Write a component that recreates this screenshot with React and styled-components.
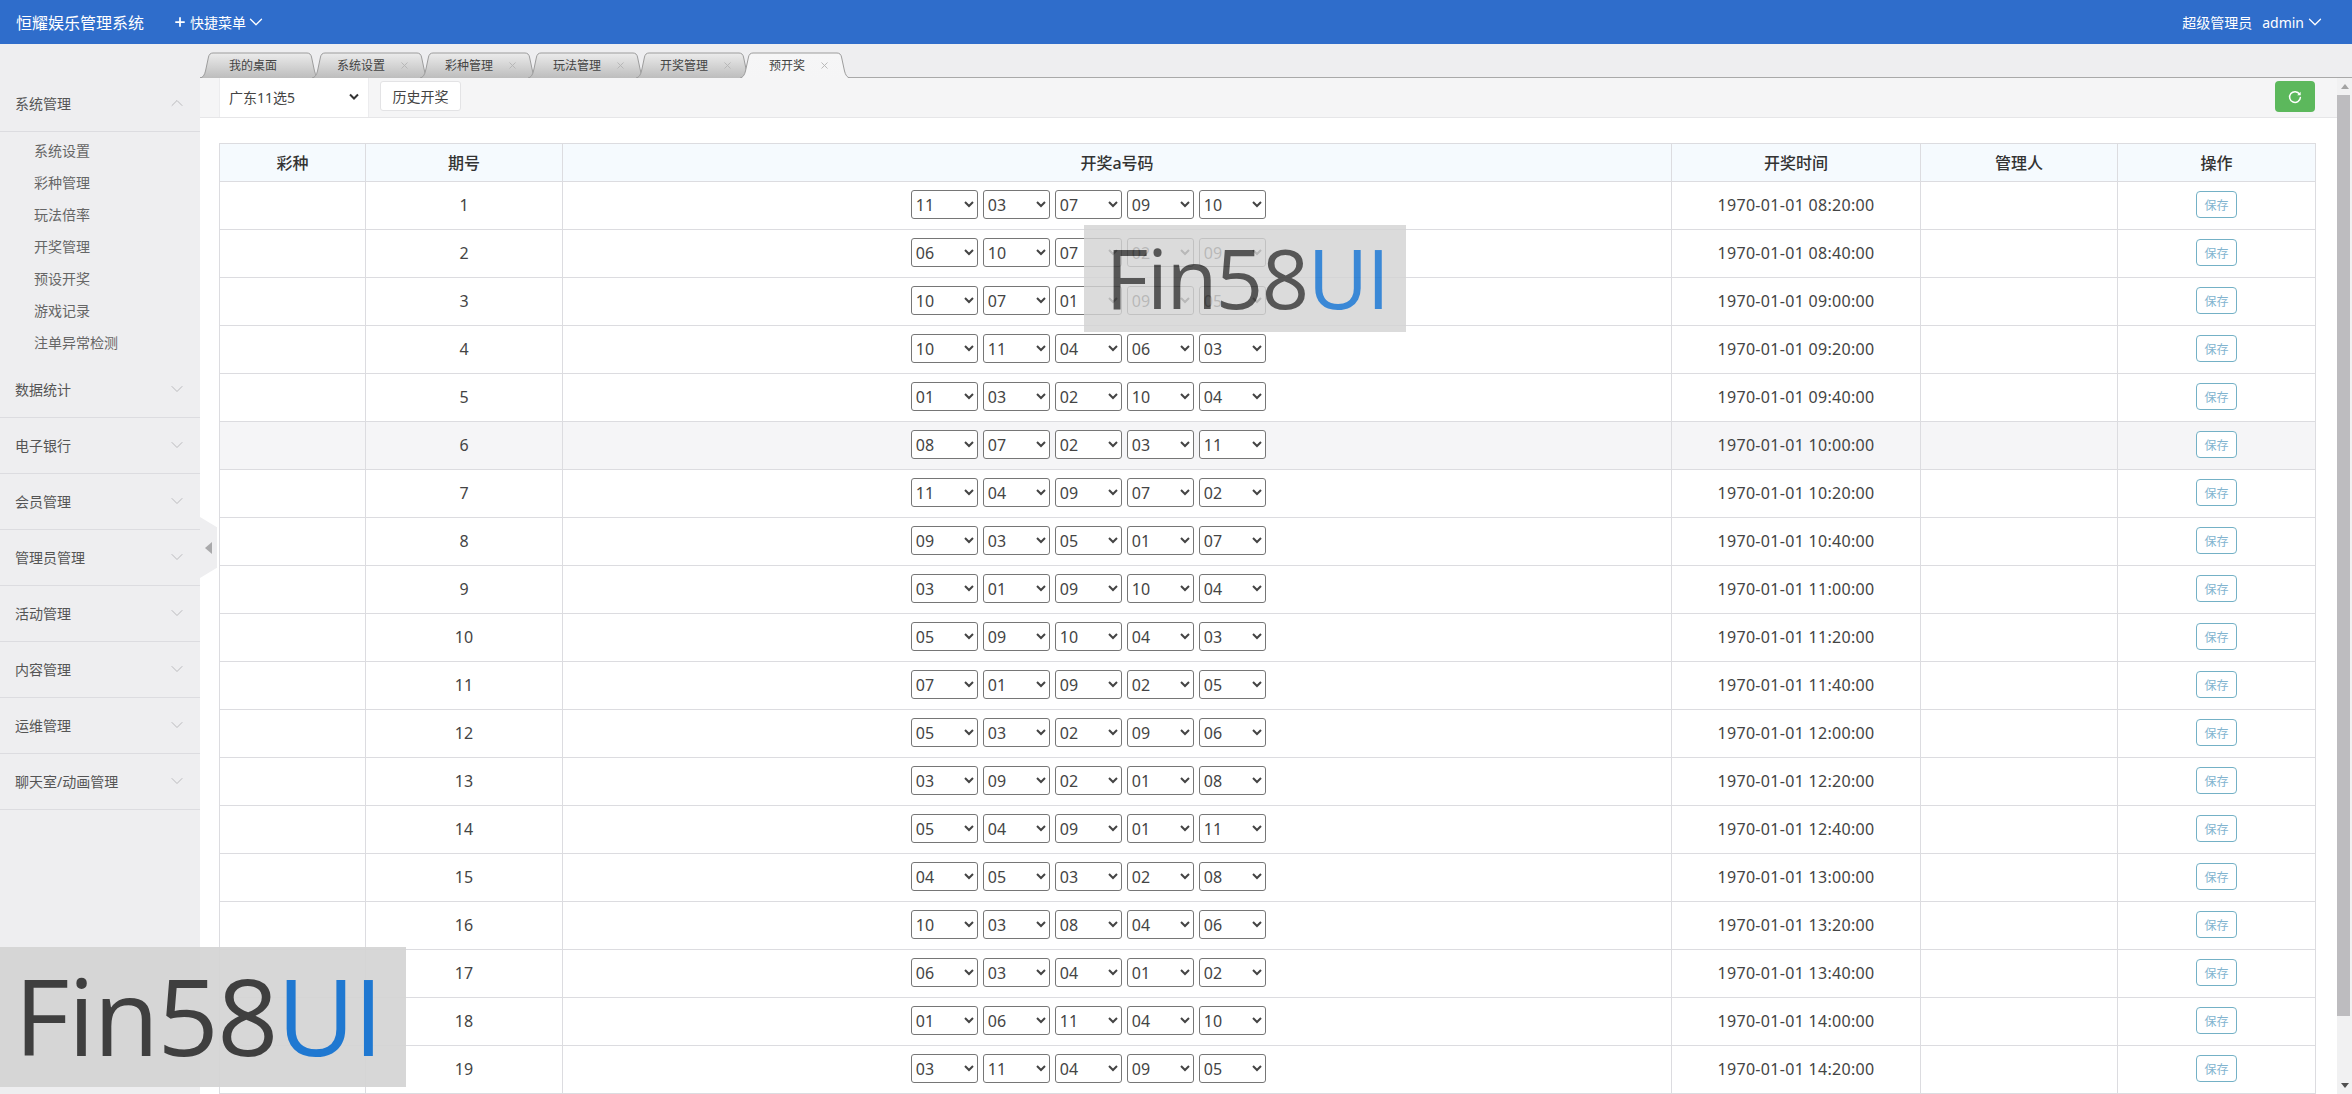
import React from "react";
import styled, { createGlobalStyle } from "styled-components";
import { ChevronDown, ChevronUp, Plus, X } from "lucide-react";

const FONT = `"Noto Sans", "Noto Sans CJK SC", sans-serif`;

const selectArrow = `url("data:image/svg+xml,%3Csvg xmlns='http://www.w3.org/2000/svg' width='10' height='8'%3E%3Cpath d='M1 1.5l4 4 4-4' fill='none' stroke='%23333' stroke-width='2'/%3E%3C/svg%3E")`;

const GlobalStyle = createGlobalStyle`
  html, body {
    margin: 0;
    height: 100%;
    overflow: hidden;
    font-family: ${FONT};
    color: #333;
  }
  * { box-sizing: border-box; }
`;

const Page = styled.div`
  position: relative;
  height: 100vh;
  display: flex;
  flex-direction: column;
  overflow: hidden;
`;

const TopBar = styled.header`
  height: 44px;
  flex: none;
  background: #2f6dcb;
  color: #fff;
  display: flex;
  align-items: center;
  padding: 0 26px 0 16px;
`;

const Brand = styled.div`
  font-size: 16px;
  width: 157px;
`;

const QuickMenu = styled.div`
  display: flex;
  align-items: center;
  font-size: 14px;
  gap: 3px;
`;

const MenuChevron = styled(ChevronDown)`
  margin-left: -4px;
`;

const UserBox = styled.div`
  margin-left: auto;
  display: flex;
  align-items: center;
  font-size: 14px;
  gap: 10px;
`;

const UserName = styled.span`
  display: flex;
  align-items: center;
`;

const Body = styled.div`
  flex: 1;
  min-height: 0;
  display: flex;
`;

const Sidebar = styled.aside`
  width: 200px;
  flex: none;
  background: #eeeef0;
  padding-top: 32px;
`;

const GroupHead = styled.div`
  height: 56px;
  padding: 0 13px 2px 15px;
  display: flex;
  align-items: center;
  justify-content: space-between;
  font-size: 14px;
  color: #555;
  border-bottom: 1px solid #dcdce0;
`;

const GroupList = styled.ul`
  list-style: none;
  margin: 0;
  padding: 4px 0 2px 34px;
`;

const GroupItem = styled.li`
  height: 32px;
  line-height: 30px;
  font-size: 14px;
  color: #666;
`;

const Main = styled.main`
  flex: 1;
  min-width: 0;
  display: flex;
  flex-direction: column;
`;

const TabBar = styled.div`
  height: 34px;
  flex: none;
  background: #eeeef0;
  border-bottom: 1px solid #a9a9a9;
  display: flex;
  align-items: flex-end;
  padding-top: 8px;
`;

const Tab = styled.div`
  position: relative;
  width: ${(p) => p.$width}px;
  height: 26px;
  margin-right: ${(p) => p.$gap || 0}px;
  margin-bottom: -1px;
  z-index: ${(p) => (p.$active ? 2 : 1)};
  display: flex;
  align-items: center;
  font-size: 12px;
  color: #444;
  padding-left: ${(p) => p.$pad}px;
`;

const TabShape = styled.svg`
  position: absolute;
  inset: 0;
  width: 100%;
  height: 100%;
  z-index: -1;
`;

const TabClose = styled(X)`
  margin-left: 14px;
  color: #b5b5b5;
`;

const ContentRow = styled.div`
  flex: 1;
  min-height: 0;
  display: flex;
`;

const Scroller = styled.div`
  flex: 1;
  min-width: 0;
  overflow: hidden;
  background: #fff;
`;

const ScrollRail = styled.div`
  width: 15px;
  flex: none;
  background: #f1f1f2;
  display: flex;
  flex-direction: column;
  align-items: center;
`;

const ScrollArrow = styled.div`
  height: 17px;
  flex: none;
  display: flex;
  align-items: center;
  margin-top: ${(p) => (p.$down ? "auto" : "0")};

  &::before {
    content: "";
    border-style: solid;
    border-color: transparent;
    border-width: ${(p) => (p.$down ? "5px 4px 0" : "0 4px 5px")};
    border-top-color: ${(p) => (p.$down ? "#505050" : "transparent")};
    border-bottom-color: ${(p) => (p.$down ? "transparent" : "#a3a3a3")};
  }
`;

const ScrollThumb = styled.div`
  width: 13px;
  height: 921px;
  flex: none;
  align-self: flex-start;
  background: #bdbcbf;
`;

const Toolbar = styled.div`
  height: 40px;
  background: #f5f5f6;
  border-bottom: 1px solid #e6e6e8;
  display: flex;
  align-items: flex-start;
  padding: 0 22px 0 19px;
  margin-bottom: 25px;
`;

const LotterySelect = styled.select`
  appearance: none;
  width: 150px;
  height: 39px;
  padding-left: 9px;
  background: #fff ${selectArrow} no-repeat 129px 15px;
  border: 1px solid #ececee;
  border-width: 0 1px;
  border-radius: 0;
  font-family: ${FONT};
  font-size: 14px;
  color: #444;
`;

const HistoryButton = styled.button`
  margin: 3px 0 0 11px;
  width: 81px;
  height: 30px;
  padding: 0;
  background: #fff;
  border: 1px solid #e3e3e5;
  border-radius: 3px;
  font-family: ${FONT};
  font-size: 14px;
  color: #444;
`;

const RefreshButton = styled.button`
  margin: 3px 0 0 auto;
  width: 40px;
  height: 31px;
  padding: 0;
  background: #5cb85c;
  border: 0;
  border-radius: 4px;
  display: flex;
  align-items: center;
  justify-content: center;
`;

const TableWrap = styled.div`
  padding: 0 22px 0 19px;
`;

const Table = styled.table`
  width: 2096px;
  table-layout: fixed;
  border-collapse: collapse;
  font-size: 16px;
  text-align: center;
`;

const HeadCell = styled.th`
  height: 38px;
  padding: 0 0 1px;
  background: #f5fafe;
  border: 1px solid #dcdce0;
  font-weight: 500;
  color: #333;
`;

const Row = styled.tr`
  background: ${(p) => (p.$hover ? "#f5f5f7" : "#fff")};
`;

const Cell = styled.td`
  height: 48px;
  padding: 0 0 2px;
  border: 1px solid #dcdce0;
  color: #444;
  letter-spacing: ${(p) => p.$spaced || 0}px;
`;

const NumberBox = styled.div`
  display: flex;
  justify-content: center;
  gap: 4.5px;
  padding-right: 57px;
`;

const NumberSelect = styled.select`
  width: 67.5px;
  height: 29px;
  background: #fff;
  border: 1px solid #767676;
  border-radius: 3px;
  font-family: ${FONT};
  font-size: 16px;
  color: #444;
`;

const SaveButton = styled.button`
  width: 41px;
  height: 27px;
  padding: 0;
  background: #fff;
  border: 1px solid #74b1c6;
  border-radius: 4px;
  font-family: ${FONT};
  font-size: 12px;
  color: #82b4cf;
`;

const CollapseHandle = styled.div`
  position: absolute;
  left: 200px;
  top: 517px;
  width: 17px;
  height: 61px;
  background: #eeeef0;
  clip-path: polygon(0 0, 100% 17%, 100% 83%, 0 100%);
  display: flex;
  align-items: center;
  justify-content: center;

  &::before {
    content: "";
    border-style: solid;
    border-width: 6px 7px 6px 0;
    border-color: transparent #a9a9ab transparent transparent;
  }
`;

const Watermark = styled.div`
  position: absolute;
  left: ${(p) => p.$left}px;
  top: ${(p) => p.$top}px;
  width: ${(p) => p.$width}px;
  height: ${(p) => p.$height}px;
  padding: 0 ${(p) => p.$padRight}px 0 ${(p) => p.$padLeft}px;
  background: rgba(212, 212, 212, 0.92);
  opacity: ${(p) => p.$opacity};
  font-family: "Open Sans", sans-serif;
  font-size: ${(p) => p.$size}px;
  letter-spacing: ${(p) => p.$spacing}px;
  line-height: ${(p) => p.$height - 4}px;
  color: #3f3f3f;
  text-align: center;
  white-space: nowrap;
`;

const WatermarkAccent = styled.span`
  color: #1f78d1;
`;

const groups = ["数据统计", "电子银行", "会员管理", "管理员管理", "活动管理", "内容管理", "运维管理", "聊天室/动画管理"];
const subItems = ["系统设置", "彩种管理", "玩法倍率", "开奖管理", "预设开奖", "游戏记录", "注单异常检测"];

const tabs = [
  { label: "我的桌面", width: 120, pad: 29, gap: -8 },
  { label: "系统设置", width: 118, pad: 25, gap: -10, close: true },
  { label: "彩种管理", width: 118, pad: 25, gap: -10, close: true },
  { label: "玩法管理", width: 118, pad: 25, gap: -10, close: true },
  { label: "开奖管理", width: 116, pad: 24, gap: -12, close: true },
  { label: "预开奖", width: 110, pad: 29, close: true, active: true },
];

const rows = [
  "11 03 07 09 10", "06 10 07 02 09", "10 07 01 09 05", "10 11 04 06 03", "01 03 02 10 04",
  "08 07 02 03 11", "11 04 09 07 02", "09 03 05 01 07", "03 01 09 10 04", "05 09 10 04 03",
  "07 01 09 02 05", "05 03 02 09 06", "03 09 02 01 08", "05 04 09 01 11", "04 05 03 02 08",
  "10 03 08 04 06", "06 03 04 01 02", "01 06 11 04 10", "03 11 04 09 05",
].map((r) => r.split(" "));

const balls = ["01", "02", "03", "04", "05", "06", "07", "08", "09", "10", "11"];

const drawTime = (i) => {
  const mins = 8 * 60 + 20 * (i + 1);
  const h = String(Math.floor(mins / 60)).padStart(2, "0");
  const m = String(mins % 60).padStart(2, "0");
  return `1970-01-01 ${h}:${m}:00`;
};

function TabBack({ id, active, width }) {
  const w = width;
  const d = `M0 26 C3 25.5 4.5 23 5.5 19 L8.5 5 C9 2.5 10.5 1 13 1 L${w - 13} 1 C${w - 10.5} 1 ${w - 9} 2.5 ${w - 8.5} 5 L${w - 5.5} 19 C${w - 4.5} 23 ${w - 3} 25.5 ${w} 26`;
  return (
    <TabShape viewBox={`0 0 ${w} 26`} preserveAspectRatio="none">
      <defs>
        <linearGradient id={id} x1="0" y1="0" x2="0" y2="1">
          <stop offset="0" stopColor={active ? "#f6f6f7" : "#ececec"} />
          <stop offset="1" stopColor={active ? "#f5f5f6" : "#bdbdbd"} />
        </linearGradient>
      </defs>
      <path d={d} fill={`url(#${id})`} stroke="#9c9c9c" strokeWidth="1" />
    </TabShape>
  );
}

function RefreshIcon() {
  return (
    <svg width="14" height="14" viewBox="0 0 14 14" fill="none">
      <path d="M11.6 4.2A5.4 5.4 0 1 0 12.4 7.4" stroke="#fff" strokeWidth="1.5" strokeLinecap="round" />
      <path d="M12.6 1.8v3.4H9.2z" fill="#fff" />
    </svg>
  );
}

export default function App() {
  return (
    <Page>
      <GlobalStyle />
      <TopBar>
        <Brand>恒耀娱乐管理系统</Brand>
        <QuickMenu>
          <Plus size={14} strokeWidth={3} />
          快捷菜单
          <MenuChevron size={22} strokeWidth={1.4} />
        </QuickMenu>
        <UserBox>
          超级管理员
          <UserName>
            admin
            <ChevronDown size={22} strokeWidth={1.4} />
          </UserName>
        </UserBox>
      </TopBar>
      <Body>
        <Sidebar>
          <GroupHead>
            系统管理
            <ChevronUp size={20} strokeWidth={1.1} color="#b5b5b8" />
          </GroupHead>
          <GroupList>
            {subItems.map((s) => (
              <GroupItem key={s}>{s}</GroupItem>
            ))}
          </GroupList>
          {groups.map((g) => (
            <GroupHead key={g}>
              {g}
              <ChevronDown size={20} strokeWidth={1.1} color="#b5b5b8" />
            </GroupHead>
          ))}
        </Sidebar>
        <Main>
          <TabBar>
            {tabs.map((t, i) => (
              <Tab key={t.label} $width={t.width} $pad={t.pad} $gap={t.gap} $active={t.active}>
                <TabBack id={`tab-${i}`} active={t.active} width={t.width} />
                {t.label}
                {t.close && <TabClose size={11} strokeWidth={2} />}
              </Tab>
            ))}
          </TabBar>
          <ContentRow>
            <Scroller>
              <Toolbar>
                <LotterySelect defaultValue="广东11选5">
                  <option>广东11选5</option>
                </LotterySelect>
                <HistoryButton>历史开奖</HistoryButton>
                <RefreshButton>
                  <RefreshIcon />
                </RefreshButton>
              </Toolbar>
              <TableWrap>
                <Table>
                  <colgroup>
                    <col width="146" />
                    <col width="197" />
                    <col width="1109" />
                    <col width="249" />
                    <col width="197" />
                    <col width="198" />
                  </colgroup>
                  <thead>
                    <tr>
                      <HeadCell>彩种</HeadCell>
                      <HeadCell>期号</HeadCell>
                      <HeadCell>开奖a号码</HeadCell>
                      <HeadCell>开奖时间</HeadCell>
                      <HeadCell>管理人</HeadCell>
                      <HeadCell>操作</HeadCell>
                    </tr>
                  </thead>
                  <tbody>
                    {rows.map((nums, i) => (
                      <Row key={i} $hover={i === 5}>
                        <Cell />
                        <Cell>{i + 1}</Cell>
                        <Cell>
                          <NumberBox>
                            {nums.map((n, j) => (
                              <NumberSelect key={j} defaultValue={n}>
                                {balls.map((b) => (
                                  <option key={b}>{b}</option>
                                ))}
                              </NumberSelect>
                            ))}
                          </NumberBox>
                        </Cell>
                        <Cell $spaced={0.3}>{drawTime(i)}</Cell>
                        <Cell />
                        <Cell>
                          <SaveButton>保存</SaveButton>
                        </Cell>
                      </Row>
                    ))}
                  </tbody>
                </Table>
              </TableWrap>
            </Scroller>
            <ScrollRail>
              <ScrollArrow />
              <ScrollThumb />
              <ScrollArrow $down />
            </ScrollRail>
          </ContentRow>
        </Main>
      </Body>
      <CollapseHandle />
      <Watermark $left={1084} $top={225} $width={322} $height={107} $size={83} $spacing={-1.5} $padLeft={4} $padRight={0} $opacity={0.88}>
        Fin58<WatermarkAccent>UI</WatermarkAccent>
      </Watermark>
      <Watermark $left={0} $top={947} $width={406} $height={140} $size={107} $spacing={-1.5} $padLeft={0} $padRight={10} $opacity={1}>
        Fin58<WatermarkAccent>UI</WatermarkAccent>
      </Watermark>
    </Page>
  );
}
